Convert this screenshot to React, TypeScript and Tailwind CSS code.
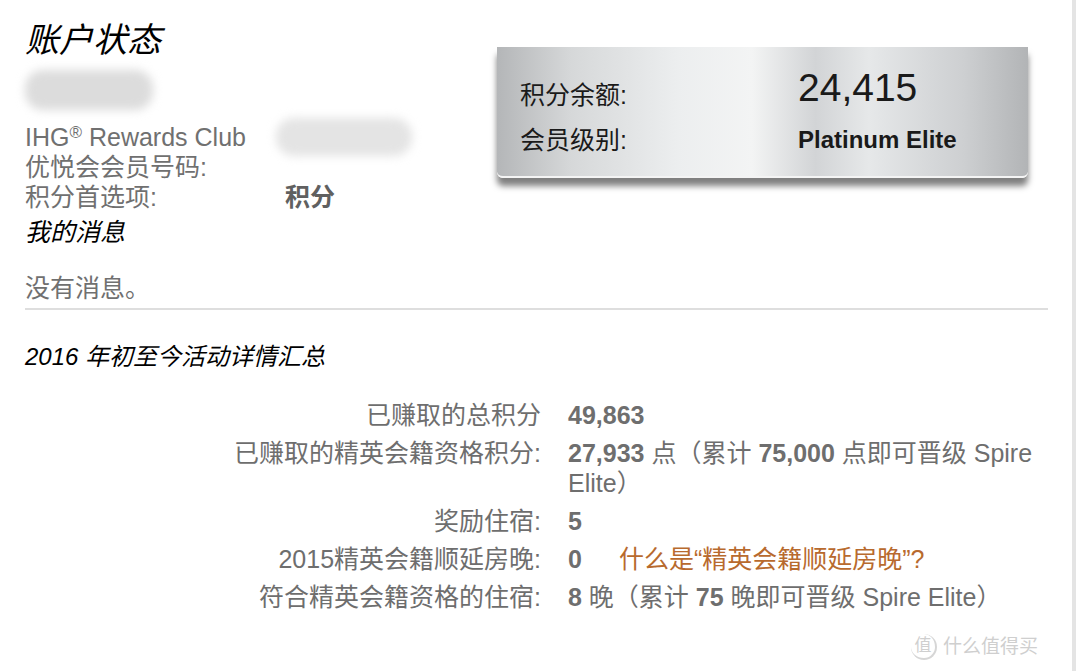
import React from 'react';

const FONT = "font-['Liberation_Sans','Noto_Sans_CJK_SC',sans-serif]";

const rows = [
  { label: '已赚取的总积分', value: <b>49,863</b> },
  {
    label: '已赚取的精英会籍资格积分:',
    value: (
      <>
        <b>27,933</b> 点（累计 <b>75,000</b> 点即可晋级 Spire Elite）
      </>
    ),
  },
  { label: '奖励住宿:', value: <b>5</b> },
  {
    label: '2015精英会籍顺延房晚:',
    value: (
      <>
        <b>0</b>
        <span className="ml-[37px] text-[#b86a2e]">什么是“精英会籍顺延房晚”?</span>
      </>
    ),
  },
  {
    label: '符合精英会籍资格的住宿:',
    value: (
      <>
        <b>8</b> 晚（累计 <b>75</b> 晚即可晋级 Spire Elite）
      </>
    ),
  },
];

export default function App() {
  return (
    <div className={`relative flex h-[671px] w-[1080px] overflow-hidden bg-white ${FONT}`}>
      {/* Main column */}
      <div className="w-[1072px] pl-[25px] pr-[24px]">
        {/* Top area */}
        <div className="flex items-start">
          <div className="w-[472px] pt-[20px] text-[25px] leading-[30px] text-[#707070]">
            <h1 className="text-[34px] leading-[40px] italic text-black">账户状态</h1>
            <div className="mt-[10px] h-[40px] w-[128px] rounded-[18px] bg-[#dcdcdc] blur-[5px]" />
            <div className="mt-[12px] flex h-[30px] items-center">
              <span>
                IHG<sup className="text-[17px]">®</sup> Rewards Club
              </span>
              <span className="ml-[30px] h-[38px] w-[136px] rounded-[18px] bg-[#e4e4e4] blur-[5px]" />
            </div>
            <div>优悦会会员号码:</div>
            <div className="flex">
              <span className="w-[260px]">积分首选项:</span>
              <span className="font-bold text-[#606060]">积分</span>
            </div>
            <div className="mt-[5px] italic text-black">我的消息</div>
            <div className="mt-[26px]">没有消息。</div>
          </div>

          {/* Silver balance panel */}
          <div className="mt-[47px] h-[131px] w-[531px] rounded-b-[6px] border-b-2 border-[#f4f4f4] bg-[linear-gradient(90deg,#b4b6b8_0%,#d6d8d9_14%,#eceeef_34%,#f3f4f4_48%,#d2d4d6_60%,#e6e8e9_70%,#cdcfd1_88%,#b2b4b6_100%)] shadow-[0_8px_6px_rgba(0,0,0,0.5)]">
            <div className="grid grid-cols-[278px_1fr] items-end px-[23px] pt-[19px] text-[#1a1a1a]">
              <span className="text-[25px] leading-[30px]">积分余额:</span>
              <span className="text-[39px] leading-[44px]">24,415</span>
              <span className="mt-[15px] text-[25px] leading-[30px]">会员级别:</span>
              <span className="mt-[15px] text-[24px] leading-[30px] font-bold">Platinum Elite</span>
            </div>
          </div>
        </div>

        <div className="mt-[5px] h-[2px] bg-[#dedede]" />

        {/* Activity summary */}
        <h2 className="mt-[33px] text-[24px] leading-[28px] italic text-black">2016 年初至今活动详情汇总</h2>

        <div className="mt-[29px] flex flex-col gap-[8px] text-[25px] leading-[30px] text-[#6e6e6e]">
          {rows.map((r) => (
            <div key={r.label} className="flex">
              <div className="w-[516px] shrink-0 text-right">{r.label}</div>
              <div className="ml-[27px] w-[480px]">{r.value}</div>
            </div>
          ))}
        </div>
      </div>

      {/* Right edge strip */}
      <div className="w-[4px] bg-[#e4e4e4]" />
      <div className="flex-1 bg-white" />

      {/* Watermark */}
      <div className="absolute bottom-[10px] right-[42px] flex items-center gap-[6px] text-[19px] text-[#cfcfcf]">
        <span className="flex h-[26px] w-[26px] items-center justify-center rounded-full border-r-2 border-b-2 border-[#d6d6d6] text-[17px]">值</span>
        <span>什么值得买</span>
      </div>
    </div>
  );
}
